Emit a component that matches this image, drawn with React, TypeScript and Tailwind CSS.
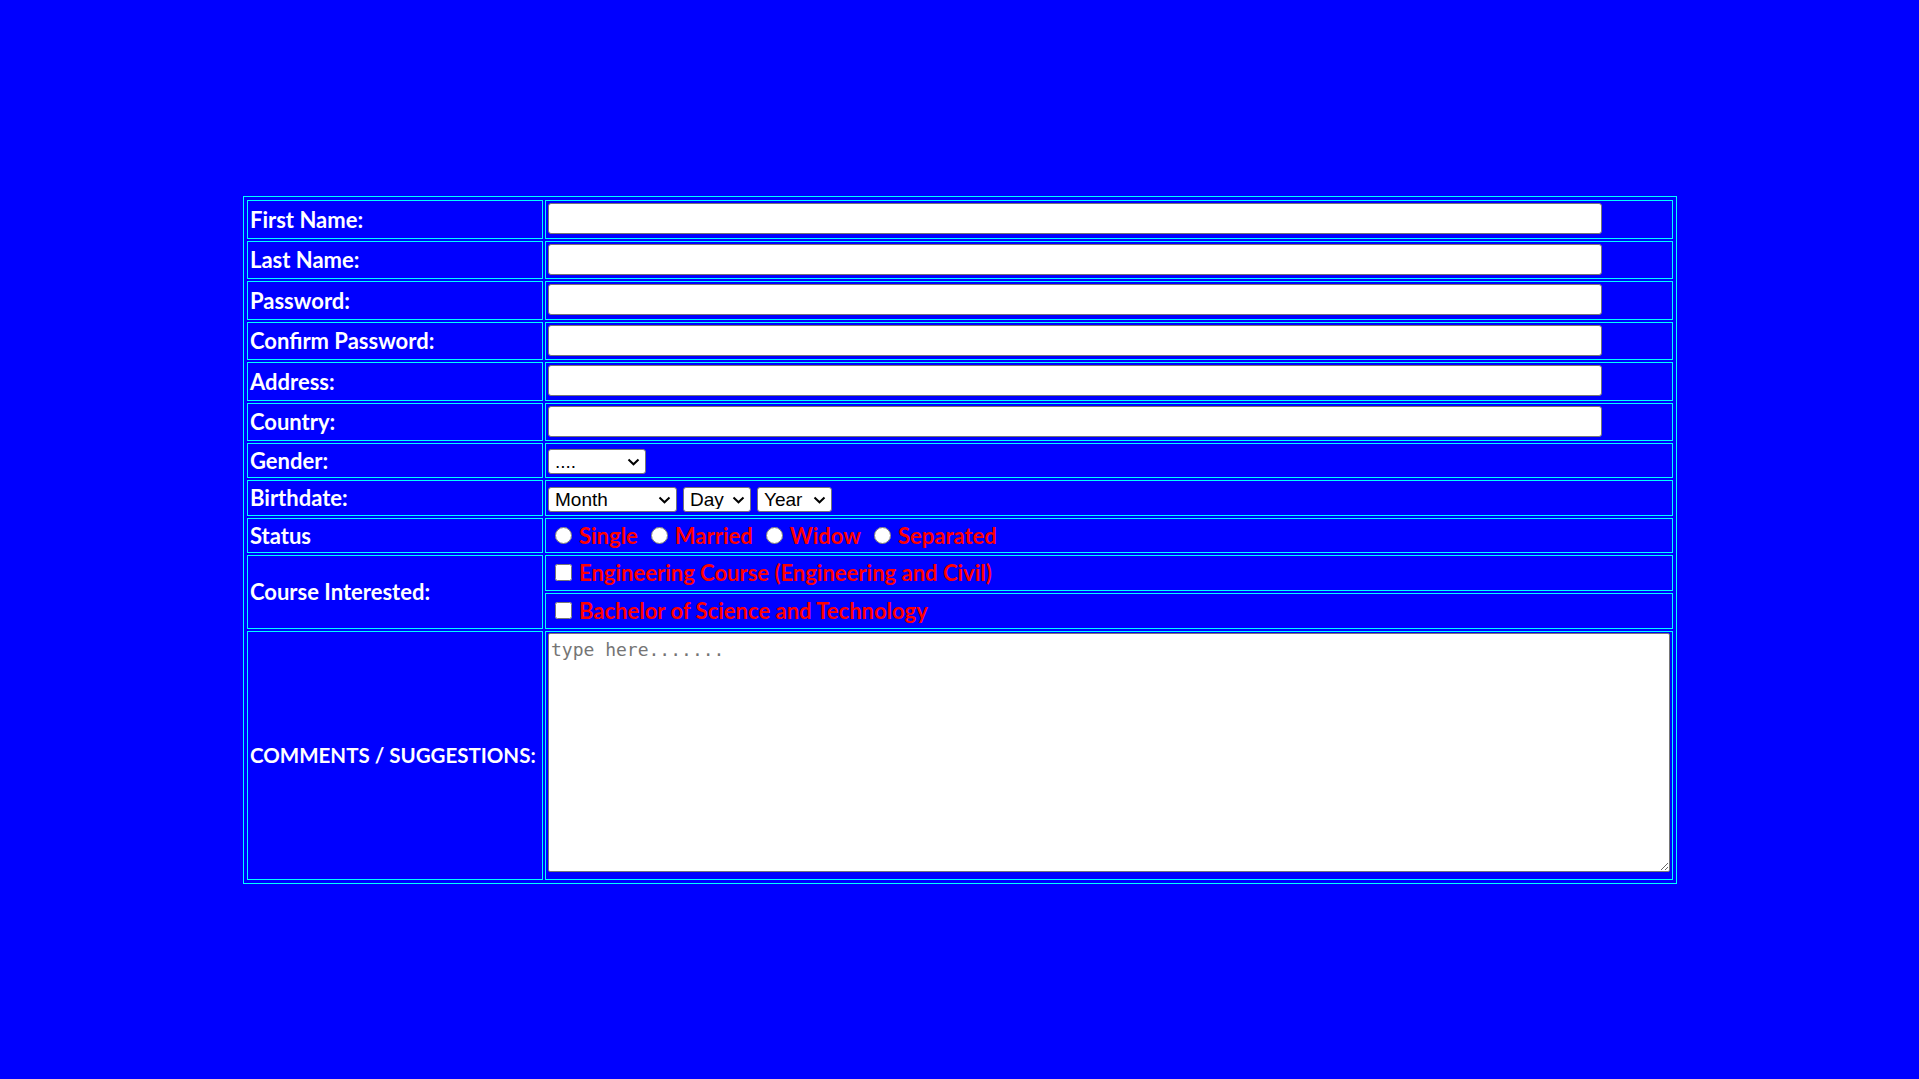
import { useState } from "react";

const textFields = [
  { id: "fname", label: "First Name:", type: "text" },
  { id: "lname", label: "Last Name:", type: "text" },
  { id: "pass", label: "Password:", type: "password" },
  { id: "cpass", label: "Confirm Password:", type: "password" },
  { id: "address", label: "Address:", type: "text" },
  { id: "country", label: "Country:", type: "text" },
];

const statuses = ["Single", "Married", "Widow", "Separated"];

const months = [
  "January", "February", "March", "April", "May", "June",
  "July", "August", "September", "October", "November", "December",
];

const labelCell =
  "flex items-center border border-[#00ffff] pl-[2px] whitespace-nowrap text-[22px] font-bold text-white";
const fieldCell = "flex border border-[#00ffff]";
const redText = "flex items-center gap-[7px] text-[22px] font-bold text-[#ff0000]";

function Select({ name, width, options }: { name: string; width: string; options: string[] }) {
  return (
    <div className={`relative h-[25px] ${width}`}>
      <select
        name={name}
        className="h-full w-full appearance-none rounded-[3px] border border-[#767676] bg-white pl-[6px] text-[19px] leading-none text-black outline-none font-['Liberation_Sans',Arial,sans-serif]"
      >
        {options.map((o) => (
          <option key={o}>{o}</option>
        ))}
      </select>
      <svg
        viewBox="0 0 13 8"
        className="pointer-events-none absolute right-[6px] top-[9px] h-[8px] w-[13px]"
        fill="none"
        stroke="#000"
        strokeWidth="2"
      >
        <path d="M1.5 1.5 L6.5 6.3 L11.5 1.5" />
      </svg>
    </div>
  );
}

export default function App() {
  const [status, setStatus] = useState("");

  return (
    <main className="min-h-screen bg-[#0000ff] pt-[196px] font-['Lato','Open_Sans',sans-serif]">
      <form className="ml-[243px] w-[1434px] border border-[#00ffff] p-[3px]">
        <div className="grid grid-cols-[296px_1128px] grid-rows-[38.5px_38.5px_38.5px_38.5px_38.5px_38.5px_35px_35.5px_35px_36px_36px_249.5px] gap-[2px]">
          {textFields.map((field) => (
            <div key={field.id} className="contents">
              <div className={labelCell}>{field.label}</div>
              <div className={`${fieldCell} items-start pl-[2px] pt-[2px]`}>
                <input
                  type={field.type}
                  name={field.id}
                  className="h-[31px] w-[1054px] rounded-[3px] border border-[#767676] bg-white px-[2px] text-[16px] text-black outline-none"
                />
              </div>
            </div>
          ))}

          <div className={labelCell}>Gender:</div>
          <div className={`${fieldCell} items-start pl-[2px] pt-[5px]`}>
            <Select name="gender" width="w-[98px]" options={["....", "Male", "Female"]} />
          </div>

          <div className={labelCell}>Birthdate:</div>
          <div className={`${fieldCell} items-start gap-[6px] pl-[2px] pt-[6px]`}>
            <Select name="month" width="w-[129px]" options={["Month", ...months]} />
            <Select
              name="day"
              width="w-[68px]"
              options={["Day", ...Array.from({ length: 31 }, (_, i) => String(i + 1))]}
            />
            <Select
              name="year"
              width="w-[75px]"
              options={["Year", ...Array.from({ length: 60 }, (_, i) => String(2024 - i))]}
            />
          </div>

          <div className={labelCell}>Status</div>
          <div className={`${fieldCell} items-center gap-[13px] pl-[9px]`}>
            {statuses.map((s) => (
              <label key={s} className={redText}>
                <input
                  type="radio"
                  name="status"
                  checked={status === s}
                  onChange={() => setStatus(s)}
                  className="m-0 h-[17px] w-[17px]"
                />
                {s}
              </label>
            ))}
          </div>

          <div className={`${labelCell} row-span-2`}>Course Interested:</div>
          <div className={`${fieldCell} items-center pl-[9px]`}>
            <label className={redText}>
              <input type="checkbox" name="course1" className="m-0 h-[17px] w-[17px]" />
              Engineering Course (Engineering and Civil)
            </label>
          </div>
          <div className={`${fieldCell} items-center pl-[9px]`}>
            <label className={redText}>
              <input type="checkbox" name="course2" className="m-0 h-[17px] w-[17px]" />
              Bachelor of Science and Technology
            </label>
          </div>

          <div className="flex items-center border border-[#00ffff] pl-[2px] whitespace-nowrap text-[20.5px] font-bold text-white">
            COMMENTS / SUGGESTIONS:
          </div>
          <div className={`${fieldCell} items-start pl-[2px] pt-[1px]`}>
            <textarea
              name="comments"
              placeholder="type here......."
              className="h-[239px] w-[1122px] rounded-[2px] border border-[#767676] bg-white px-[2px] py-[2px] text-[18px] text-black outline-none placeholder:text-[#757575] font-['DejaVu_Sans_Mono',monospace]"
            />
          </div>
        </div>
      </form>
    </main>
  );
}
